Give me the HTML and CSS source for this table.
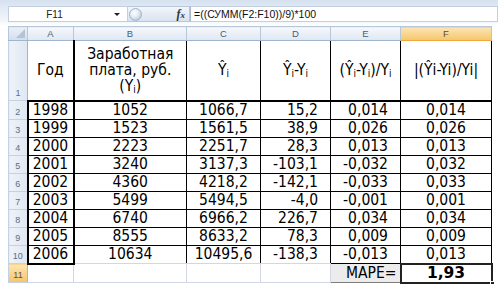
FILE: index.html
```html
<!DOCTYPE html>
<html>
<head>
<meta charset="utf-8">
<link rel="stylesheet" href="styles.css">
</head>
<body>
<div class="fbar">
  <div class="namebox"><span class="nb-text">F11</span><span class="dd"></span></div>
  <div class="fxbtn"><span class="knob"></span><span class="fx">f<span class="fxx">x</span></span></div>
  <div class="formula">=((СУММ(F2:F10))/9)*100</div>
</div>
<table class="sheet">
  <colgroup>
    <col class="w-rh"><col class="w-a"><col class="w-b"><col class="w-c"><col class="w-d"><col class="w-e"><col class="w-f">
  </colgroup>
  <tr class="hdr">
    <th class="corner"><span class="tri"></span></th>
    <th>A</th><th>B</th><th>C</th><th>D</th><th>E</th><th class="sel">F</th>
  </tr>
  <tr class="r1">
    <th class="rh">1</th>
    <td class="a">Год</td>
    <td class="b"><div class="ln">Заработная</div><div class="ln">плата, руб.</div><div class="ln">(Y<sub>i</sub>)</div></td>
    <td class="c">Ŷ<sub>i</sub></td>
    <td class="cd">Ŷ<sub>i</sub>-Y<sub>i</sub></td>
    <td class="ce">(Ŷ<sub>i</sub>-Y<sub>i</sub>)/Y<sub>i</sub></td>
    <td class="cf">|(Ŷi-Yi)/Yi|</td>
  </tr>
  <tr class="d"><th class="rh">2</th><td class="a">1998</td><td class="b">1052</td><td class="c">1066,7</td><td class="cd rt">15,2</td><td class="ce rt">0,014</td><td class="cf">0,014</td></tr>
  <tr class="d"><th class="rh">3</th><td class="a">1999</td><td class="b">1523</td><td class="c">1561,5</td><td class="cd rt">38,9</td><td class="ce rt">0,026</td><td class="cf">0,026</td></tr>
  <tr class="d"><th class="rh">4</th><td class="a">2000</td><td class="b">2223</td><td class="c">2251,7</td><td class="cd rt">28,3</td><td class="ce rt">0,013</td><td class="cf">0,013</td></tr>
  <tr class="d"><th class="rh">5</th><td class="a">2001</td><td class="b">3240</td><td class="c">3137,3</td><td class="cd rt">-103,1</td><td class="ce rt">-0,032</td><td class="cf">0,032</td></tr>
  <tr class="d"><th class="rh">6</th><td class="a">2002</td><td class="b">4360</td><td class="c">4218,2</td><td class="cd rt">-142,1</td><td class="ce rt">-0,033</td><td class="cf">0,033</td></tr>
  <tr class="d"><th class="rh">7</th><td class="a">2003</td><td class="b">5499</td><td class="c">5494,5</td><td class="cd rt">-4,0</td><td class="ce rt">-0,001</td><td class="cf">0,001</td></tr>
  <tr class="d"><th class="rh">8</th><td class="a">2004</td><td class="b">6740</td><td class="c">6966,2</td><td class="cd rt">226,7</td><td class="ce rt">0,034</td><td class="cf">0,034</td></tr>
  <tr class="d"><th class="rh">9</th><td class="a">2005</td><td class="b">8555</td><td class="c">8633,2</td><td class="cd rt">78,3</td><td class="ce rt">0,009</td><td class="cf">0,009</td></tr>
  <tr class="d last"><th class="rh">10</th><td class="a">2006</td><td class="b">10634</td><td class="c">10495,6</td><td class="cd rt">-138,3</td><td class="ce rt">-0,013</td><td class="cf">0,013</td></tr>
  <tr class="r11">
    <th class="rh sel">11</th>
    <td></td><td></td><td></td><td></td>
    <td class="mape">MAPE=</td>
    <td class="active"><b>1,93</b><span class="handle"></span></td>
  </tr>
</table>
</body>
</html>
```
FILE: styles.css
```css
* { box-sizing: border-box; }
body {
  margin: 0;
  background: #fff;
  font-family: "DejaVu Sans Condensed", "DejaVu Sans", sans-serif;
  font-stretch: condensed;
}
.fbar {
  height: 26px;
  display: flex;
  padding: 6px 0 0 8px;
  background: linear-gradient(#d6e1ef 0, #dfe8f4 6px, #f4f7fb 22px, #fff 26px);
}
.namebox {
  width: 120px;
  height: 16px;
  background: #fff;
  border: 1px solid #c3cfdf;
  display: flex;
  align-items: center;
  font-family: "Liberation Sans", sans-serif;
  font-stretch: normal;
  font-size: 10px;
  color: #222;
}
.nb-text { flex: 1; text-align: center; padding-right: 14px; }
.dd {
  width: 0; height: 0;
  border-left: 3px solid transparent;
  border-right: 3px solid transparent;
  border-top: 3px solid #222;
  margin-right: 7px;
}
.fxbtn {
  width: 62px;
  height: 16px;
  display: flex;
  align-items: center;
  justify-content: space-between;
  background: linear-gradient(#f3f6fb, #d9e3f0);
  border: 1px solid #b8c7da;
  border-left: none;
  padding: 0 4px 0 1px;
}
.knob {
  width: 13px; height: 13px;
  border-radius: 50%;
  background: radial-gradient(circle at 40% 35%, #fff 0, #e6edf6 40%, #a9bcd4 100%);
  border: 1px solid #9fb3cc;
}
.fx {
  font-family: "Liberation Serif", serif;
  font-style: italic;
  font-weight: bold;
  font-size: 12px;
  color: #333;
  font-stretch: normal;
}
.fxx { font-size: 9px; }
.formula {
  flex: 1;
  height: 16px;
  background: #fff;
  border: 1px solid #c3cfdf;
  border-left: 1px solid #a9b8cc;
  font-family: "Liberation Sans", sans-serif;
  font-stretch: normal;
  font-size: 10.5px;
  line-height: 14px;
  padding-left: 3px;
  color: #111;
}
.sheet {
  margin-left: 8px;
  border-collapse: collapse;
  table-layout: fixed;
  width: 483px;
}
.w-rh { width: 19px; }
.w-a { width: 46px; }
.w-b { width: 113px; }
.w-c { width: 74px; }
.w-d { width: 70px; }
.w-e { width: 70px; }
.w-f { width: 91px; }
.sheet th, .sheet td { padding: 0; }
.hdr th {
  height: 14px;
  font-family: "Liberation Sans", sans-serif;
  font-stretch: normal;
  font-weight: normal;
  font-size: 9.5px;
  line-height: 12px;
  color: #4c5c74;
  background: linear-gradient(#f6f8fc, #dfe7f2);
  border: 1px solid #b7c6d8;
  border-bottom: 1px solid #9eb6ce;
  text-align: center;
}
.hdr th.sel {
  background: linear-gradient(#fde5b4, #f6c56c);
  color: #5c4a2a;
  border-bottom-color: #f2a93b;
}
.hdr .corner {
  position: relative;
  background: linear-gradient(#eaf0f8, #d3deec);
}
.tri {
  position: absolute;
  right: 2px; bottom: 2px;
  width: 0; height: 0;
  border-left: 9px solid transparent;
  border-bottom: 9px solid #b4c3d6;
}
.rh {
  font-family: "Liberation Sans", sans-serif;
  font-stretch: normal;
  font-weight: normal;
  font-size: 9px;
  color: #5b6d88;
  background: linear-gradient(90deg, #eef3f9, #dfe7f2);
  border: 1px solid #c5d2e2;
  border-right: 1px solid #9eb6ce;
  text-align: center;
  vertical-align: bottom;
  line-height: 13px;
}
.rh.sel {
  background: linear-gradient(#fde5b4, #f6c56c);
  color: #6a4f1f;
  border-right-color: #f2a93b;
}
.sheet td {
  border: 1px solid #d0d7e5;
  font-size: 15.5px;
  line-height: 17px;
  color: #000;
  text-align: center;
  vertical-align: bottom;
  white-space: nowrap;
  height: 18px;
}
.sheet sub { font-size: 10px; vertical-align: -2px; line-height: 0; }
.r1 td {
  height: 60px;
  vertical-align: middle;
  line-height: 16px;
  border-right: 1px solid #000;
  border-bottom: 2px solid #000;
}
.r1 .ln { height: 16px; }
.r1 td.a { border-right: 2px solid #000; }
.d td {
  border-right: 1px solid #000;
  border-bottom: 1px solid #000;
}
.d td.a {
  border-left: 2px solid #000;
  border-right: 2px solid #000;
}
.d td.rt { text-align: right; padding-right: 12px; }
.last td.b, .last td.c, .last td.cd { border-bottom: 1px solid #d0d7e5; }
.last td.a { border-bottom: 2px solid #000; }
.r11 td { height: 18px; }
.r11 td.mape {
  background: #ececec;
  border: 1px solid #7d7d7d;
  text-align: right;
  padding-right: 3px;
}
.r11 td.active {
  position: relative;
  border: 2px solid #222;
  background: #fff;
}
.r11 td.active b {
  font-stretch: normal;
  font-family: "DejaVu Sans", sans-serif;
}
.handle {
  position: absolute;
  right: -4px; bottom: -4px;
  width: 5px; height: 5px;
  background: #222;
  border: 1px solid #fff;
}
```
